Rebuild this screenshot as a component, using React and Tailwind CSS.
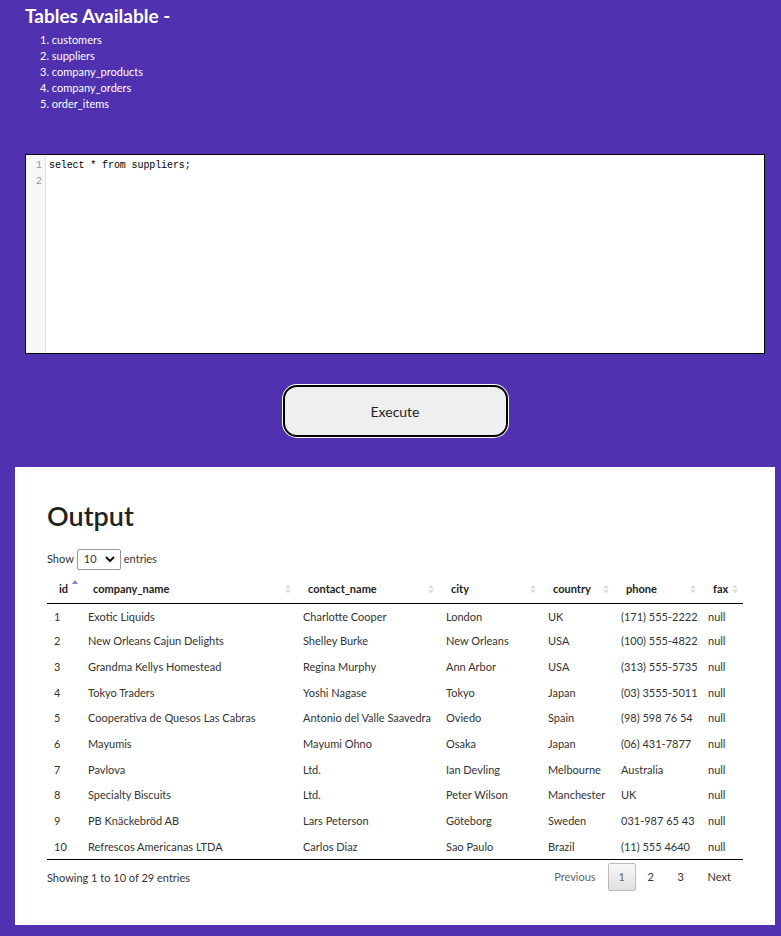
import React from 'react';

const tables = ['customers', 'suppliers', 'company_products', 'company_orders', 'order_items'];

const columns = [
  { key: 'id', label: 'id', w: 'w-[34px]', active: true },
  { key: 'company_name', label: 'company_name', w: 'w-[215px]' },
  { key: 'contact_name', label: 'contact_name', w: 'w-[143px]' },
  { key: 'city', label: 'city', w: 'w-[102px]' },
  { key: 'country', label: 'country', w: 'w-[73px]' },
  { key: 'phone', label: 'phone', w: 'w-[87px]' },
  { key: 'fax', label: 'fax', w: 'w-[42px]' },
];

const rows = [
  ['1', 'Exotic Liquids', 'Charlotte Cooper', 'London', 'UK', '(171) 555-2222', 'null'],
  ['2', 'New Orleans Cajun Delights', 'Shelley Burke', 'New Orleans', 'USA', '(100) 555-4822', 'null'],
  ['3', 'Grandma Kellys Homestead', 'Regina Murphy', 'Ann Arbor', 'USA', '(313) 555-5735', 'null'],
  ['4', 'Tokyo Traders', 'Yoshi Nagase', 'Tokyo', 'Japan', '(03) 3555-5011', 'null'],
  ['5', 'Cooperativa de Quesos Las Cabras', 'Antonio del Valle Saavedra', 'Oviedo', 'Spain', '(98) 598 76 54', 'null'],
  ['6', 'Mayumis', 'Mayumi Ohno', 'Osaka', 'Japan', '(06) 431-7877', 'null'],
  ['7', 'Pavlova', 'Ltd.', 'Ian Devling', 'Melbourne', 'Australia', 'null'],
  ['8', 'Specialty Biscuits', 'Ltd.', 'Peter Wilson', 'Manchester', 'UK', 'null'],
  ['9', 'PB Knäckebröd AB', 'Lars Peterson', 'Göteborg', 'Sweden', '031-987 65 43', 'null'],
  ['10', 'Refrescos Americanas LTDA', 'Carlos Diaz', 'Sao Paulo', 'Brazil', '(11) 555 4640', 'null'],
];

const SortIcon = () => (
  <span className="absolute right-[5px] top-[calc(50%+1px)] -translate-y-1/2 flex flex-col gap-[1px]">
    <svg width="6" height="4" viewBox="0 0 6 4"><path d="M3 0 L6 4 L0 4 Z" fill="#dcdcdc" /></svg>
    <svg width="6" height="4" viewBox="0 0 6 4"><path d="M0 0 L6 0 L3 4 Z" fill="#dcdcdc" /></svg>
  </span>
);

const App = () => {
  return (
    <div className="min-h-[936px] w-[781px] bg-[#5031b0] pt-[4px] pb-[11px]" style={{ fontFamily: 'Lato, "Open Sans", sans-serif' }}>
      {/* Tables list */}
      <div className="pl-[25px] text-white">
        <h2 className="text-[19px] font-bold leading-[24px]">Tables Available -</h2>
        <ol className="mt-[4px] pl-[15px] text-[11px] leading-[16px]">
          {tables.map((t, i) => (
            <li key={t}>{i + 1}. {t}</li>
          ))}
        </ol>
      </div>

      {/* Editor */}
      <div className="mx-[25px] mt-[42px] h-[200px] w-[740px] border border-black bg-white flex">
        <div className="w-[20px] bg-[#f7f7f7] border-r border-[#e3e3e3] pt-[3px] text-right pr-[3px] text-[10px] leading-[16px] text-[#999]" style={{ fontFamily: '"Liberation Mono", monospace' }}>
          <div>1</div>
          <div>2</div>
        </div>
        <div className="pl-[3px] pt-[3px] text-[10px] leading-[16px] text-black tracking-[-0.1px]" style={{ fontFamily: '"Liberation Mono", monospace' }}>
          select * from suppliers;
        </div>
      </div>

      {/* Execute */}
      <div className="flex justify-center mt-[31px] pl-[9px]">
        <button className="h-[52px] w-[225px] rounded-[14px] border-2 border-black bg-[#efefef] text-[14px] text-[#222] ring-1 ring-white">
          Execute
        </button>
      </div>

      {/* Output panel */}
      <div className="ml-[15px] mt-[30px] w-[760px] h-[458px] bg-white px-[32px] pt-[31px]">
        <h1 className="text-[27px] font-semibold leading-[36px] text-[#222]">Output</h1>

        <div className="mt-[15px] flex items-center gap-[3px] text-[11px] text-[#333]">
          <span>Show</span>
          <div className="relative h-[21px] w-[44px] rounded-[2px] border border-[#999] bg-white flex items-center pl-[6px]">
            <span>10</span>
            <svg className="absolute right-[5px]" width="10" height="7" viewBox="0 0 10 7"><path d="M1 1 L5 5 L9 1" stroke="#111" strokeWidth="2" fill="none" /></svg>
          </div>
          <span>entries</span>
        </div>

        <table className="mt-[3px] w-[696px] table-fixed border-collapse text-[11px] text-[#333]">
          <colgroup>
            {columns.map((c) => <col key={c.key} className={c.w} />)}
          </colgroup>
          <thead>
            <tr className="border-b border-black">
              {columns.map((c) => (
                <th key={c.key} className="relative h-[30px] pl-[12px] pt-[2px] text-left font-bold text-[#222]">
                  {c.label}
                  {c.active ? (
                    <span className="absolute left-[25px] top-[7px]">
                      <svg width="6" height="4" viewBox="0 0 6 4"><path d="M3 0 L6 4 L0 4 Z" fill="#8a7fd6" /></svg>
                    </span>
                  ) : (
                    <SortIcon />
                  )}
                </th>
              ))}
            </tr>
          </thead>
          <tbody>
            {rows.map((r, i) => (
              <tr key={i} className={i === rows.length - 1 ? 'border-b border-black' : ''}>
                {r.map((cell, j) => (
                  <td key={j} className={`h-[25.7px] pl-[7px] whitespace-nowrap overflow-hidden ${i === 0 ? 'pt-[2px]' : ''}`}>{cell}</td>
                ))}
              </tr>
            ))}
          </tbody>
        </table>

        <div className="w-[696px] flex justify-between items-start text-[11px] text-[#333]">
          <div className="mt-[10px]">Showing 1 to 10 of 29 entries</div>
          <div className="flex items-center mt-[3px] mr-[12px]">
            <span className="px-[12px] text-[#666]">Previous</span>
            <span className="h-[28px] w-[28px] flex items-center justify-center rounded-[2px] border border-[#bbb] bg-gradient-to-b from-[#f8f8f8] to-[#e0e0e0] text-[#666]">1</span>
            <span className="w-[30px] text-center">2</span>
            <span className="w-[30px] text-center">3</span>
            <span className="pl-[12px]">Next</span>
          </div>
        </div>
      </div>
    </div>
  );
};

export default App;
